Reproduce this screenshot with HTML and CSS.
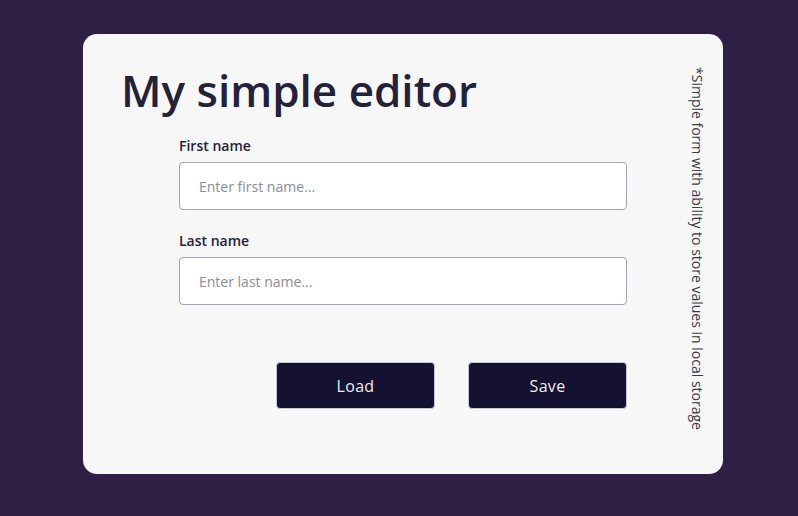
FILE: index.html
```html
<!DOCTYPE html>
<html>
<head>
<meta charset="utf-8">
<link rel="stylesheet" href="styles.css">
</head>
<body>
<div class="page">
  <div class="card">
    <div class="main">
      <h1 class="title">My simple editor</h1>
      <form class="form">
        <label class="field">
          <span class="label">First name</span>
          <input class="input" type="text" placeholder="Enter first name...">
        </label>
        <label class="field">
          <span class="label">Last name</span>
          <input class="input" type="text" placeholder="Enter last name...">
        </label>
        <div class="actions">
          <button type="button" class="btn">Load</button>
          <button type="button" class="btn">Save</button>
        </div>
      </form>
    </div>
    <div class="note">*Simple form with ability to store values in local storage</div>
  </div>
</div>
</body>
</html>
```

FILE: styles.css
```css
* { box-sizing: border-box; }
html, body { margin: 0; padding: 0; }
body {
  background: #2e1f45;
  font-family: "Open Sans", "Noto Sans", sans-serif;
  width: 798px;
  height: 516px;
  overflow: hidden;
}
.page {
  padding: 34px 0 0 83px;
}
.card {
  width: 640px;
  height: 440px;
  background: #f7f7f8;
  border-radius: 14px;
  display: flex;
  justify-content: space-between;
}
.main {
  padding: 26px 0 0 38px;
}
.title {
  margin: 0;
  font-size: 44px;
  font-weight: 600;
  color: #22223a;
  line-height: 60px;
}
.form {
  margin: 16px 0 0 58px;
  width: 448px;
  display: flex;
  flex-direction: column;
}
.field {
  display: flex;
  flex-direction: column;
  margin-bottom: 21px;
}
.label {
  font-size: 14px;
  font-weight: 600;
  color: #22223a;
  line-height: 19px;
  margin-bottom: 7px;
}
.input {
  height: 48px;
  border: 1px solid #a3a3b5;
  border-radius: 4px;
  background: #fff;
  padding: 0 19px;
  font-family: inherit;
  font-size: 14px;
  color: #22223a;
  outline: none;
}
.input::placeholder { color: #8c8c9e; }
.actions {
  display: flex;
  justify-content: flex-end;
  gap: 33px;
  margin-top: 36px;
}
.btn {
  width: 159px;
  height: 47px;
  background: #151131;
  color: #ececf2;
  border: 1px solid #c8c8d0;
  border-radius: 4px;
  font-family: inherit;
  font-size: 16px;
  font-weight: 400;
  letter-spacing: 0.3px;
}
.note {
  writing-mode: vertical-rl;
  font-size: 14px;
  color: #3a3a48;
  padding: 33px 16px 0 0;
  line-height: 19px;
}
```
